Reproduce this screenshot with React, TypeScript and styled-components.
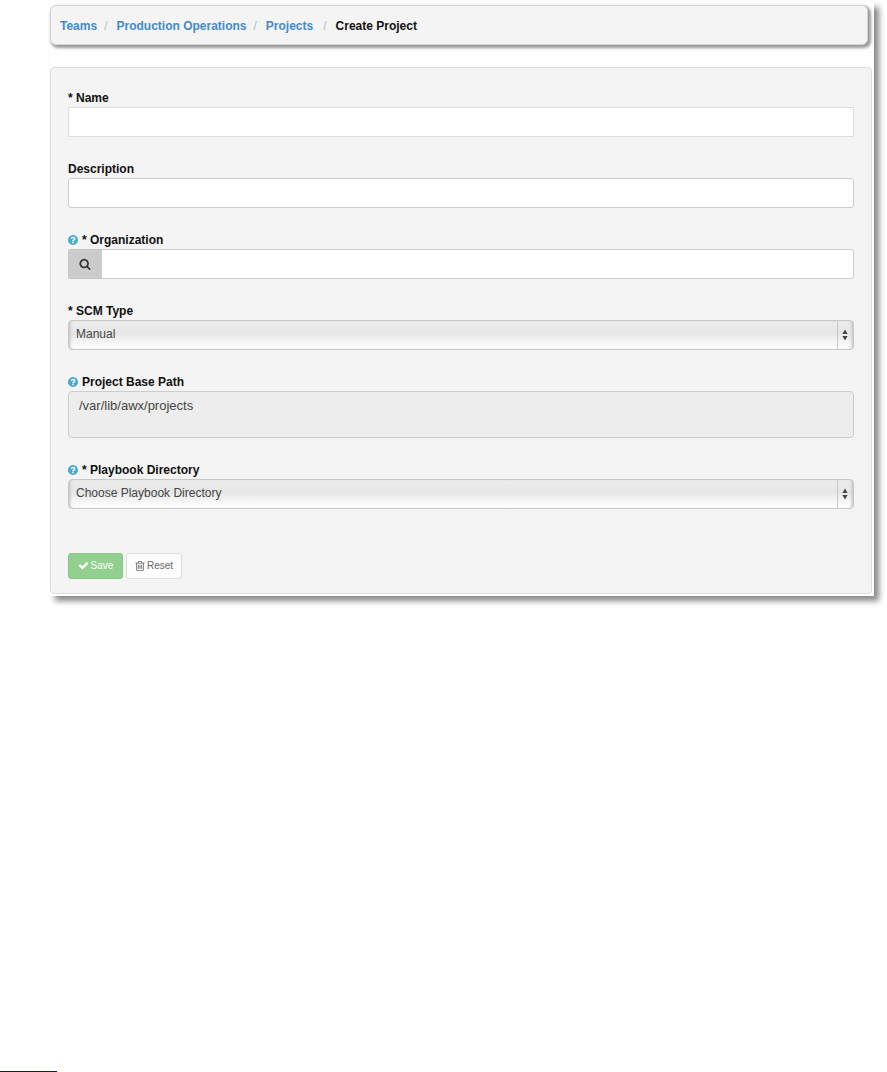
import React from 'react';
import styled, { createGlobalStyle } from 'styled-components';

const GlobalStyle = createGlobalStyle`
  *, *::before, *::after { box-sizing: border-box; }
  body {
    margin: 0;
    background: #fff;
    color: #111;
    font-family: 'Liberation Sans', Arial, Helvetica, sans-serif;
    font-size: 12px;
    line-height: 18px;
  }
  input, select, textarea, button { font-family: inherit; }
`;

const Page = styled.div`
  display: flex;
  flex-direction: column;
  min-height: 100vh;
`;

const Frame = styled.main`
  margin: 2px 13px 0 50px;
  padding: 3px 2px 2px 0;
  background: #fff;
  box-shadow: 5px 5px 6px #888;
`;

const Breadcrumb = styled.nav`
  margin: 0 4px 22px 0;
  padding: 11px 9px 9px;
  background: #f4f4f4;
  border: 1px solid #d5d5d5;
  border-radius: 6px;
  box-shadow: 2px 2px 3px 1px #999;

  ol {
    display: flex;
    margin: 0;
    padding: 0;
    list-style: none;
    font-weight: bold;
  }
`;

const Crumb = styled.li<{ $wide?: boolean }>`
  &:not(:last-child)::after {
    content: '/';
    font-weight: normal;
    color: #bbb;
    padding: 0 9px 0 ${(p) => (p.$wide ? 10 : 7)}px;
  }
  a {
    color: #428bca;
    text-decoration: none;
  }
`;

const Panel = styled.form`
  padding: 21px 17px 14px;
  background: #f4f4f4;
  border: 1px solid #ddd;
  border-radius: 4px;
`;

const Field = styled.div`
  display: flex;
  flex-direction: column;
  margin-bottom: 23px;
`;

const LabelRow = styled.div`
  display: flex;
  align-items: center;
  gap: 4px;
  height: 18px;
  font-weight: bold;
`;

const HelpButton = styled.button`
  display: flex;
  padding: 0;
  border: 0;
  background: none;
  color: #46aad0;
`;

const TextInput = styled.input<{ $faint?: boolean }>`
  flex: 1;
  min-width: 0;
  min-height: 30px;
  padding: 4px 10px;
  border: 1px solid ${(p) => (p.$faint ? '#ddd' : '#ccc')};
  border-radius: ${(p) => (p.$faint ? 1 : 3)}px;
  background: #fff;
  color: #444;
  font-size: 13px;
`;

const LookupGroup = styled.div`
  display: flex;

  ${TextInput} {
    border-left: 0;
    border-radius: 0 3px 3px 0;
  }
`;

const LookupButton = styled.button`
  display: flex;
  align-items: center;
  justify-content: center;
  width: 34px;
  padding: 0;
  border: 1px solid #c5c5c5;
  border-right-color: #ccc;
  border-radius: 3px 0 0 3px;
  background: #ccc;
  color: #333;
`;

const SelectBox = styled.div`
  position: relative;
  display: flex;
`;

const Select = styled.select`
  appearance: none;
  width: 100%;
  height: 30px;
  padding: 0 24px 2px 7px;
  border: 1px solid #c8c8c8;
  border-radius: 4px;
  background: linear-gradient(#ececec, #e6e6e6 45%, #f1f1f1 65%, #fff);
  box-shadow: inset 3px 0 3px -2px #bbb, inset -3px 0 3px -2px #bbb;
  color: #444;
  font-size: 12px;
`;

const Stepper = styled.span`
  position: absolute;
  inset: 1px 1px 1px auto;
  display: flex;
  align-items: center;
  justify-content: center;
  width: 16px;
  padding-right: 1px;
  border-left: 1px solid #c8c8c8;
  color: #444;
  pointer-events: none;
`;

const ReadOnlyArea = styled.textarea`
  display: block;
  height: 47px;
  padding: 5px 10px;
  border: 1px solid #ccc;
  border-radius: 4px;
  background: #ededed;
  color: #444;
  font-size: 13px;
  line-height: 18px;
  resize: none;
`;

const Actions = styled.div`
  display: flex;
  gap: 3px;
  margin-top: 44px;
`;

const ActionButton = styled.button<{ $primary?: boolean }>`
  display: flex;
  align-items: center;
  justify-content: center;
  gap: 2px;
  min-width: 55px;
  height: 26px;
  padding: 0 8px 1px;
  border: 1px solid ${(p) => (p.$primary ? '#88c987' : '#ddd')};
  border-radius: 3px;
  background: ${(p) => (p.$primary ? '#93d08f' : '#fdfdfd')};
  color: ${(p) => (p.$primary ? '#fff' : '#666')};
  font-size: 10px;
`;

const Footer = styled.footer`
  margin-top: auto;
`;

const FooterRule = styled.div`
  width: 57px;
  border-bottom: 1px solid #0000ee;
`;

const paths = {
  search:
    'M1216 832q0-185-131.5-316.5t-316.5-131.5-316.5 131.5-131.5 316.5 131.5 316.5 316.5 131.5 316.5-131.5 131.5-316.5zm512 832q0 52-38 90t-90 38q-54 0-90-38l-343-342q-179 124-399 124-143 0-273.5-55.5t-225-150-150-225-55.5-273.5 55.5-273.5 150-225 225-150 273.5-55.5 273.5 55.5 225 150 150 225 55.5 273.5q0 220-124 399l343 343q37 37 37 90z',
  check:
    'M1671 566q0 40-28 68l-724 724-136 136q-28 28-68 28t-68-28l-136-136-362-362q-28-28-28-68t28-68l136-136q28-28 68-28t68 28l294 295 656-657q28-28 68-28t68 28l136 136q28 28 28 68z',
  trash:
    'M704 736v576q0 14-9 23t-23 9h-64q-14 0-23-9t-9-23v-576q0-14 9-23t23-9h64q14 0 23 9t9 23zm256 0v576q0 14-9 23t-23 9h-64q-14 0-23-9t-9-23v-576q0-14 9-23t23-9h64q14 0 23 9t9 23zm256 0v576q0 14-9 23t-23 9h-64q-14 0-23-9t-9-23v-576q0-14 9-23t23-9h64q14 0 23 9t9 23zm128 724v-948h-896v948q0 22 7 40.5t14.5 27 10.5 8.5h832q3 0 10.5-8.5t14.5-27 7-40.5zm-672-1076h448l-48-117q-7-9-17-11h-317q-10 2-17 11zm928 32v64q0 14-9 23t-23 9h-96v948q0 83-47 143.5t-113 60.5h-832q-66 0-113-58.5t-47-141.5v-952h-96q-14 0-23-9t-9-23v-64q0-14 9-23t23-9h309l70-167q15-37 54-63t79-26h320q40 0 79 26t54 63l70 167h309q14 0 23 9t9 23z',
  help:
    'M1024 1376v-192q0-14-9-23t-23-9h-192q-14 0-23 9t-9 23v192q0 14 9 23t23 9h192q14 0 23-9t9-23zm256-672q0-88-55.5-163t-138.5-116-170-41q-243 0-371 213-15 24 8 42l132 100q7 6 19 6 16 0 25-12 53-68 86-92 34-24 86-24 48 0 85.5 26t37.5 59q0 38-20 61t-68 45q-63 28-115.5 86.5t-52.5 125.5v36q0 14 9 23t23 9h192q14 0 23-9t9-23q0-19 21.5-49.5t54.5-49.5q32-18 49-28.5t46-35 44.5-48 28-60.5 12.5-81zm384 192q0 209-103 385.5t-279.5 279.5-385.5 103-385.5-103-279.5-279.5-103-385.5 103-385.5 279.5-279.5 385.5-103 385.5 103 279.5 279.5 103 385.5z',
};

const boxes: Record<keyof typeof paths, string> = {
  search: '0 0 1792 1792',
  check: '0 0 1792 1792',
  trash: '192 128 1408 1536',
  help: '128 128 1536 1536',
};

function Icon({ name, size }: { name: keyof typeof paths; size: number }) {
  return (
    <svg width={size} height={size} viewBox={boxes[name]} fill="currentColor" aria-hidden="true">
      <path d={paths[name]} />
    </svg>
  );
}

function FieldLabel({ htmlFor, help, children }: { htmlFor: string; help?: boolean; children: React.ReactNode }) {
  return (
    <LabelRow>
      {help && (
        <HelpButton type="button" aria-label="Help">
          <Icon name="help" size={10} />
        </HelpButton>
      )}
      <label htmlFor={htmlFor}>{children}</label>
    </LabelRow>
  );
}

function SelectField({ id, option }: { id: string; option: string }) {
  return (
    <SelectBox>
      <Select id={id}>
        <option>{option}</option>
      </Select>
      <Stepper>
        <svg width="6" height="12" viewBox="0 0 6 12" fill="currentColor" aria-hidden="true">
          <path d="M3 0.500 5.6 5H0.400zM3 11.500 5.6 7H0.400z" />
        </svg>
      </Stepper>
    </SelectBox>
  );
}

export default function App() {
  return (
    <Page>
      <GlobalStyle />
      <Frame>
        <Breadcrumb aria-label="Breadcrumb">
          <ol>
            <Crumb><a href="#teams">Teams</a></Crumb>
            <Crumb><a href="#operations">Production Operations</a></Crumb>
            <Crumb $wide><a href="#projects">Projects</a></Crumb>
            <Crumb aria-current="page">Create Project</Crumb>
          </ol>
        </Breadcrumb>
        <Panel onSubmit={(e) => e.preventDefault()}>
          <Field>
            <FieldLabel htmlFor="name">* Name</FieldLabel>
            <TextInput id="name" type="text" $faint />
          </Field>
          <Field>
            <FieldLabel htmlFor="description">Description</FieldLabel>
            <TextInput id="description" type="text" />
          </Field>
          <Field>
            <FieldLabel htmlFor="organization" help>* Organization</FieldLabel>
            <LookupGroup>
              <LookupButton type="button" aria-label="Look up organization">
                <Icon name="search" size={12} />
              </LookupButton>
              <TextInput id="organization" type="text" />
            </LookupGroup>
          </Field>
          <Field>
            <FieldLabel htmlFor="scm-type">* SCM Type</FieldLabel>
            <SelectField id="scm-type" option="Manual" />
          </Field>
          <Field>
            <FieldLabel htmlFor="base-path" help>Project Base Path</FieldLabel>
            <ReadOnlyArea id="base-path" readOnly defaultValue="/var/lib/awx/projects" />
          </Field>
          <Field>
            <FieldLabel htmlFor="playbook" help>* Playbook Directory</FieldLabel>
            <SelectField id="playbook" option="Choose Playbook Directory" />
          </Field>
          <Actions>
            <ActionButton type="submit" $primary>
              <Icon name="check" size={11} />
              Save
            </ActionButton>
            <ActionButton type="reset">
              <Icon name="trash" size={10} />
              Reset
            </ActionButton>
          </Actions>
        </Panel>
      </Frame>
      <Footer>
        <FooterRule />
      </Footer>
    </Page>
  );
}
